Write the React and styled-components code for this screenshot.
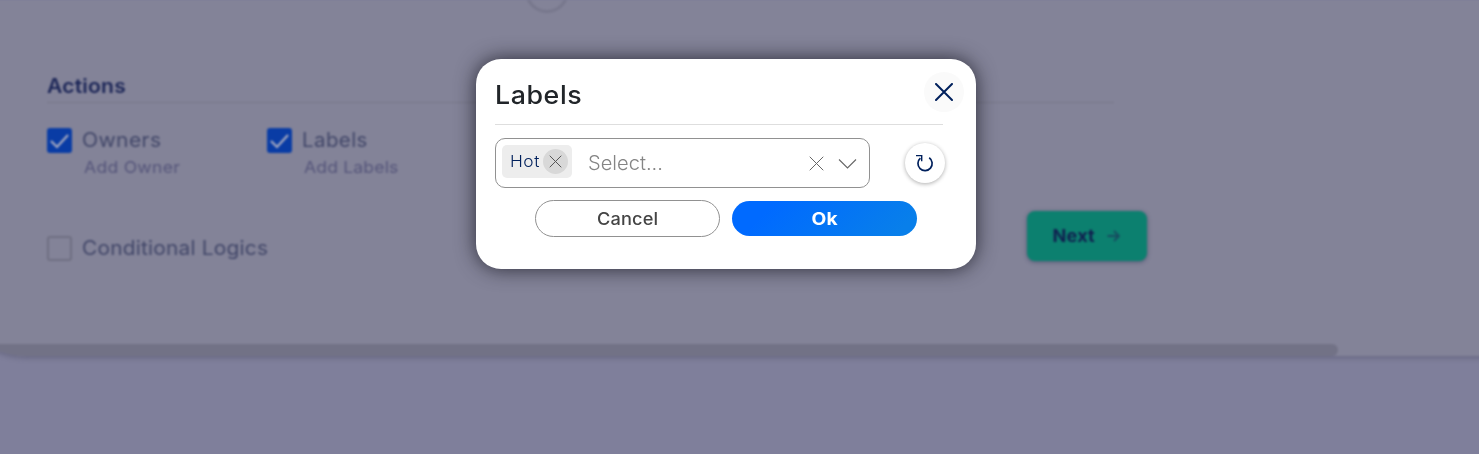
import React from "react";
import styled, { createGlobalStyle } from "styled-components";

const Global = createGlobalStyle`
  *, *::before, *::after { box-sizing: border-box; }
  body { margin: 0; overflow: hidden; background: #7f7f9b; font-family: Inter, "Open Sans", sans-serif; }
  button { font-family: inherit; margin: 0; padding: 0; cursor: pointer; }
`;
const Label = styled.span`
  display: inline-block;
  white-space: nowrap;
  font-size: ${(p) => p.$size}px;
  font-weight: ${(p) => p.$weight || 400};
  letter-spacing: ${(p) => p.$track || 0}px;
  line-height: 24px;
  color: ${(p) => p.$color};
  transform: scaleX(${(p) => p.$wide || 1});
  transform-origin: ${(p) => (p.$centered ? "center" : "left")};
`;
const Screen = styled.main`
  position: relative;
  width: 1479px;
  height: 454px;
  overflow: hidden;
`;
const Page = styled.div`
  width: 1509px;
  height: 464px;
  margin-left: -10px;
  background: #7f7f9b;
  filter: blur(0.9px);
`;
const Card = styled.section`
  display: flex;
  flex-direction: column;
  height: 356px;
  width: 1509px;
  padding-left: 10px;
  overflow: hidden;
  border-bottom-left-radius: 36px 15px;
  background: #838398;
  box-shadow: 0 2px 5px rgba(80, 80, 105, 0.5);
`;
const Step = styled.div`
  flex: none;
  width: 44px;
  height: 44px;
  margin: -31px 0 0 525px;
  border: 3px solid #77778c;
  border-radius: 50%;
`;
const Heading = styled.div`
  width: 1067px;
  height: 29px;
  margin: 61px 0 0 47px;
  border-bottom: 1px solid #777789;
`;
const Options = styled.div`
  display: flex;
  height: 81px;
  margin: 25px 0 0 47px;
`;
const Option = styled.div`
  display: flex;
  gap: 10px;
  width: 220px;
`;
const OptionText = styled.div`
  display: flex;
  flex-direction: column;
  gap: 3px;
`;
const Indented = styled.div`padding-left: 2px;`;
const Check = styled.span`
  display: flex;
  flex: none;
  width: 25px;
  height: 25px;
  border-radius: 3px;
  border: ${(p) => (p.$on ? "0" : "2px solid #6f6f82")};
  background: ${(p) => (p.$on ? "#093ca5" : "transparent")};
`;
const BottomRow = styled.div`
  display: flex;
  justify-content: space-between;
  width: 1100px;
  margin: 2px 0 0 47px;
`;
const Conditional = styled.div`
  display: flex;
  gap: 10px;
  padding-top: 25px;
`;
const Next = styled.button`
  display: flex;
  align-items: center;
  justify-content: center;
  gap: 13px;
  width: 120px;
  height: 50px;
  border: 0;
  border-radius: 8px;
  background: #0c806f;
  box-shadow: 0 1px 4px rgba(45, 55, 90, 0.6);
`;
const ScrollThumb = styled.div`
  width: 1348px;
  height: 12px;
  margin: auto 0 0 -10px;
  border-radius: 0 6px 6px 0;
  background: #727286;
`;
const Dialog = styled.div`
  position: absolute;
  left: 476px;
  top: 59px;
  width: 500px;
  height: 210px;
  padding: 13px 12px 0 19px;
  border-radius: 25px;
  background: #fff;
  box-shadow: 0 0 20px rgba(20, 20, 30, 0.8);
`;
const DialogHead = styled.header`
  display: flex;
  justify-content: space-between;
  height: 52px;
`;
const Title = styled.h2`
  margin: 0;
  padding-top: 11px;
  line-height: 24px;
`;
const Rule = styled.div`
  width: 448px;
  height: 1px;
  background: #dedede;
`;
const RoundButton = styled.button`
  display: grid;
  place-items: center;
  width: 40px;
  height: 40px;
  border: 0;
  border-radius: 50%;
  color: #00205c;
  background: ${(p) => (p.$raised ? "#fff" : "#fafafa")};
  box-shadow: ${(p) => (p.$raised ? "0 1px 4px rgba(0,0,0,.32)" : "none")};
`;
const SelectRow = styled.div`
  display: flex;
  align-items: center;
  gap: 35px;
  margin-top: 13px;
`;
const Select = styled.div`
  display: flex;
  align-items: center;
  width: 375px;
  height: 50px;
  padding: 0 12px 0 6px;
  border: 1px solid #919191;
  border-radius: 10px;
`;
const Tag = styled.div`
  display: flex;
  align-items: center;
  justify-content: space-between;
  width: 70px;
  height: 33px;
  margin: 0 16px 4px 0;
  padding: 0 4px 0 8px;
  border-radius: 5px;
  background: #ededed;
`;
const TagText = styled.div`
  padding-top: 1px;
  line-height: 24px;
`;
const Remove = styled.button`
  display: grid;
  place-items: center;
  width: 25px;
  height: 25px;
  border: 0;
  border-radius: 50%;
  background: #d8d8d8;
  color: #555;
`;
const Indicators = styled.div`
  display: flex;
  align-items: center;
  gap: 14px;
  margin-left: auto;
  color: #666;
`;
const Footer = styled.footer`
  display: flex;
  align-items: center;
  gap: 12px;
  margin: 12px 0 0 40px;
`;
const Pill = styled.button`
  width: 185px;
  height: ${(p) => (p.$primary ? 35 : 37)}px;
  border: ${(p) => (p.$primary ? "0" : "1px solid #919191")};
  border-radius: 19px;
  background: ${(p) => (p.$primary ? "linear-gradient(135deg, #006aff 20%, #087fea 90%)" : "#fff")};
`;

const Cross = ({ size, weight }) => (
  <svg width={size} height={size} viewBox={`0 0 ${size} ${size}`} fill="none" stroke="currentColor" strokeWidth={weight} strokeLinecap="round">
    <path d={`M1 1L${size - 1} ${size - 1}M${size - 1} 1L1 ${size - 1}`} />
  </svg>
);
const Tick = () => (
  <svg width="25" height="25" fill="none" stroke="#a8abc0" strokeWidth="2.2">
    <path d="M4 13l6 6L21 7" />
  </svg>
);

function Choice({ name, action, wide, track, actionTrack }) {
  return (
    <Option>
      <Check $on><Tick /></Check>
      <OptionText>
        <Label $size={19.5} $wide={wide} $track={track} $color="#414668">{name}</Label>
        <Indented><Label $size={16.5} $wide={1.065} $track={actionTrack} $color="#55557a">{action}</Label></Indented>
      </OptionText>
    </Option>
  );
}

export default function App() {
  return (
    <Screen>
      <Global />
      <Page>
        <Card>
          <Step />
          <Heading><Label $size={19.5} $weight={600} $wide={1.08} $track={0.2} $color="#1b2557">Actions</Label></Heading>
          <Options>
            <Choice name="Owners" action="Add Owner" wide={1.08} track={0.35} actionTrack={0.25} />
            <Choice name="Labels" action="Add Labels" wide={1.05} track={0.4} actionTrack={0.15} />
          </Options>
          <BottomRow>
            <Conditional>
              <Check />
              <Label $size={19.5} $wide={1.07} $track={0.2} $color="#414668">Conditional Logics</Label>
            </Conditional>
            <Next>
              <Label $size={17} $weight={700} $wide={1.07} $centered $track={0.1} $color="#10204f">Next</Label>
              <svg width="13" height="14" fill="none" stroke="#174b60" strokeWidth="1.8"><path d="M0.5 7h11.5M7 2l5 5-5 5" /></svg>
            </Next>
          </BottomRow>
          <ScrollThumb />
        </Card>
      </Page>
      <Dialog role="dialog">
        <DialogHead>
          <Title><Label $size={25} $weight={500} $wide={1.07} $track={0.55} $color="#212529">Labels</Label></Title>
          <RoundButton aria-label="Close"><Cross size={18} weight={2} /></RoundButton>
        </DialogHead>
        <Rule />
        <SelectRow>
          <Select>
            <Tag>
              <TagText><Label $size={15.5} $weight={300} $wide={1.12} $track={0.45} $color="#00205c">Hot</Label></TagText>
              <Remove aria-label="Remove Hot"><Cross size={13} weight={1} /></Remove>
            </Tag>
            <Label $size={19.5} $weight={300} $wide={1.03} $color="#858585">Select...</Label>
            <Indicators>
              <Cross size={15} weight={1} />
              <svg width="19" height="11" fill="none" stroke="currentColor" strokeWidth="1.1"><path d="M1 1.5l8.5 8.5L18 1.5" /></svg>
            </Indicators>
          </Select>
          <RoundButton $raised aria-label="Reset">
            <svg width="20" height="20" fill="none" stroke="currentColor" strokeWidth="1.7">
              <path d="M5.4 5.2A7.1 7.1 0 1 0 14.2 4.8" />
              <path d="M1 2.6H6.7V8.2" strokeWidth="1.4" />
            </svg>
          </RoundButton>
        </SelectRow>
        <Footer>
          <Pill><Label $size={17} $weight={500} $wide={1.07} $centered $track={0.15} $color="#444">Cancel</Label></Pill>
          <Pill $primary><Label $size={17} $weight={700} $wide={1.13} $centered $track={0.3} $color="#fff">Ok</Label></Pill>
        </Footer>
      </Dialog>
    </Screen>
  );
}
